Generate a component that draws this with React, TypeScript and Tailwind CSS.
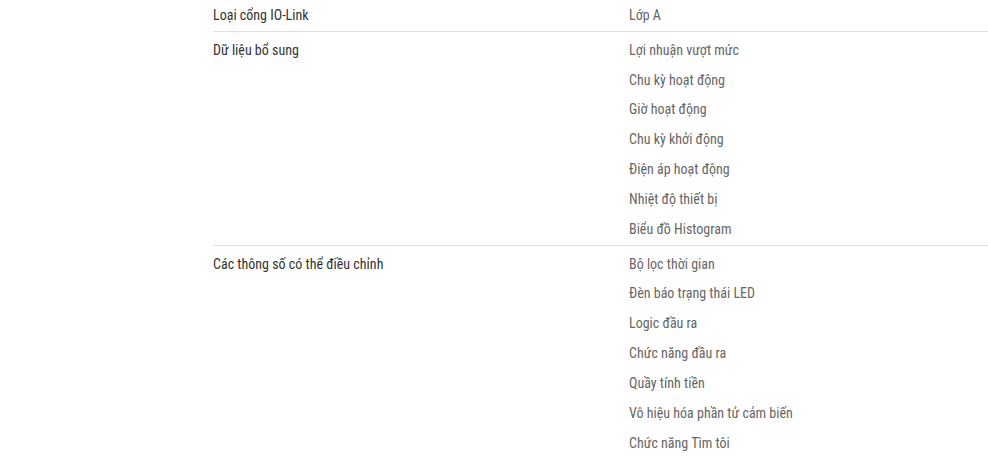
import React from "react";

const sections: { label: string; values: string[] }[] = [
  { label: "Loại cổng IO-Link", values: ["Lớp A"] },
  {
    label: "Dữ liệu bổ sung",
    values: [
      "Lợi nhuận vượt mức",
      "Chu kỳ hoạt động",
      "Giờ hoạt động",
      "Chu kỳ khởi động",
      "Điện áp hoạt động",
      "Nhiệt độ thiết bị",
      "Biểu đồ Histogram",
    ],
  },
  {
    label: "Các thông số có thể điều chỉnh",
    values: [
      "Bộ lọc thời gian",
      "Đèn báo trạng thái LED",
      "Logic đầu ra",
      "Chức năng đầu ra",
      "Quầy tính tiền",
      "Vô hiệu hóa phần tử cảm biến",
      "Chức năng Tìm tôi",
    ],
  },
];

export default function App() {
  return (
    <div
      className="w-[988px] h-[473px] overflow-hidden bg-white text-[14px] font-stretch-condensed"
      style={{ fontFamily: "Roboto, 'Liberation Sans', sans-serif" }}
    >
      <div className="ml-[213px] w-[775px]">
        {sections.map((s, i) => (
          <div
            key={s.label}
            className={
              "flex " +
              (i === 0 ? "pt-[1px]" : "pt-[4px]") +
              (i < sections.length - 1 ? " border-b border-[#e0e0e0]" : "")
            }
          >
            <div className="w-[416px] shrink-0 text-[#333333] leading-[29.83px]">
              {s.label}
            </div>
            <div className="flex flex-col text-[#666666]">
              {s.values.map((v) => (
                <div key={v} className="leading-[29.83px]">
                  {v}
                </div>
              ))}
            </div>
          </div>
        ))}
      </div>
    </div>
  );
}
